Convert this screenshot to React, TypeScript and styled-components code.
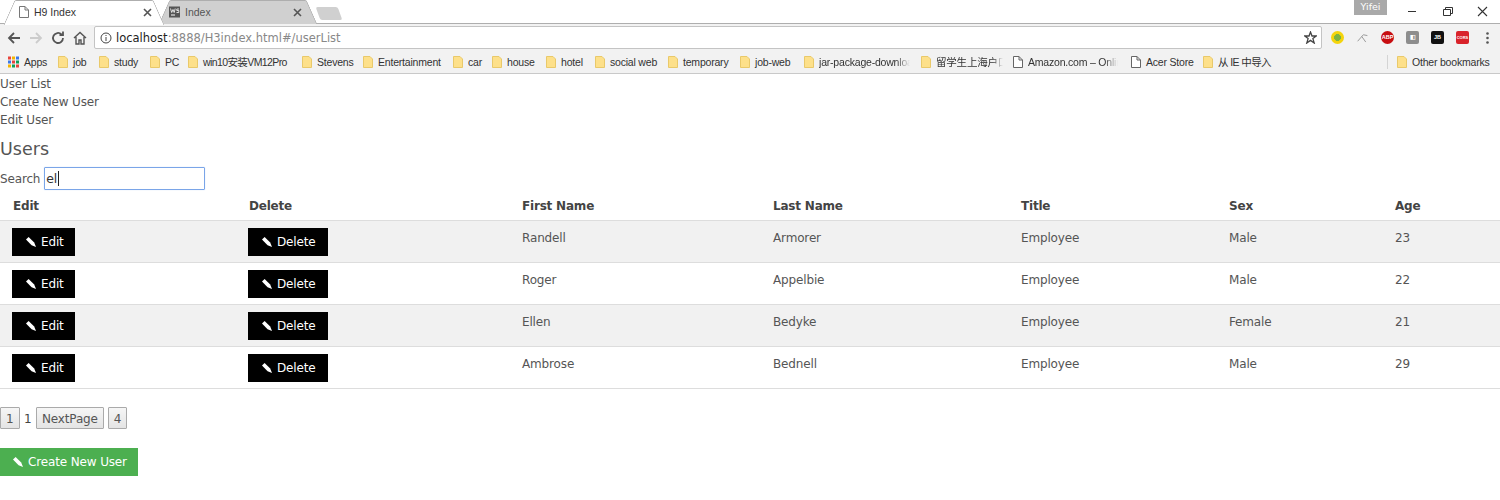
import React from 'react'
import styled, { createGlobalStyle } from 'styled-components'

const GlobalStyle = createGlobalStyle`
  html, body {
    margin: 0;
    padding: 0;
    background: #fff;
    overflow: hidden;
    font-family: "DejaVu Sans", Tahoma, sans-serif;
  }
  * { box-sizing: border-box; }
`

const Page = styled.div`
  width: 1500px;
  height: 500px;
  overflow: hidden;
`

/* browser chrome */

const TabStrip = styled.div`
  height: 24px;
  display: flex;
  align-items: flex-start;
  position: relative;
  padding-left: 5px;
  background: #fff;
  border-bottom: 1px solid #aeaeae;
`

const Tab = styled.div<{ $active?: boolean }>`
  position: relative;
  width: ${p => (p.$active ? 158 : 155)}px;
  height: 24px;
  margin-right: -3px;
  display: flex;
  align-items: center;
  padding: 0 ${p => (p.$active ? '11px 0 14px' : '13px 0 9px')};
  gap: 5px;
  font-family: "Liberation Sans", Arial, sans-serif;
  font-size: 10.5px;
  color: ${p => (p.$active ? '#333' : '#555')};
  z-index: ${p => (p.$active ? 2 : 1)};

  &::before {
    content: '';
    position: absolute;
    top: 0;
    bottom: ${p => (p.$active ? '-1px' : '0')};
    left: 4px;
    width: 70%;
    background: ${p => (p.$active ? '#fff' : '#d0d0d0')};
    border: 1px solid #aeaeae;
    border-right: 0;
    border-bottom: 0;
    border-radius: 2px 0 0 0;
    transform: skewX(-24deg);
    z-index: -1;
  }

  &::after {
    content: '';
    position: absolute;
    top: 0;
    bottom: ${p => (p.$active ? '-1px' : '0')};
    right: 4px;
    width: 70%;
    background: ${p => (p.$active ? '#fff' : '#d0d0d0')};
    border: 1px solid #aeaeae;
    border-left: 0;
    border-bottom: 0;
    border-radius: 0 2px 0 0;
    transform: skewX(24deg);
    z-index: -1;
  }
`

const TabTitle = styled.span`
  flex: 1;
`

const TabClose = styled.svg`
  width: 9px;
  height: 9px;
  stroke: #555;
  stroke-width: 1.6;
  fill: none;
`

const NewTab = styled.div`
  width: 22px;
  height: 13px;
  margin: 7px 0 0 6px;
  background: #d0d0d0;
  border-radius: 2px;
  transform: skewX(20deg);
`

const UserBadge = styled.div`
  position: absolute;
  left: 1354px;
  top: 0;
  width: 33px;
  height: 15px;
  background: #a9a9a9;
  color: #fff;
  font-size: 9.5px;
  line-height: 14px;
  text-align: center;
`

const WindowButtons = styled.div`
  position: absolute;
  right: 0;
  top: 0;
  display: flex;
`

const WindowButton = styled.svg`
  width: 35px;
  height: 22px;
  stroke: #333;
  fill: none;
`

const Toolbar = styled.div`
  height: 26px;
  display: flex;
  align-items: center;
  background: #f2f2f2;
  padding: 1px 0 0 6px;
`

const NavIcon = styled.svg<{ $ml?: number }>`
  width: 16px;
  height: 16px;
  margin-left: ${p => p.$ml ?? 0}px;
  flex: none;
  fill: none;
  stroke-width: 1.8;
`

const AddressBar = styled.div`
  width: 1228px;
  height: 23px;
  margin-left: 6px;
  display: flex;
  align-items: center;
  padding: 0 4px 0 5px;
  background: #fff;
  border: 1px solid #c4c4c4;
  border-radius: 2px;
  font-size: 11.5px;
  color: #888;
`

const InfoIcon = styled.svg`
  width: 12px;
  height: 12px;
  margin-right: 4px;
  stroke: #444;
  fill: none;
`

const Host = styled.span`
  color: #222;
`

const Url = styled.span`
  flex: 1;
`

const StarIcon = styled.svg`
  width: 13px;
  height: 13px;
  stroke: #444;
  fill: none;
  stroke-width: 1.3;
`

const Extensions = styled.div`
  flex: 1;
  display: flex;
  align-items: center;
  padding-left: 9px;
  gap: 12px;
`

const ExtBadge = styled.div<{ $bg: string; $round?: boolean; $small?: boolean }>`
  width: 13px;
  height: 13px;
  flex: none;
  background: ${p => p.$bg};
  border-radius: ${p => (p.$round ? '50%' : '2px')};
  color: #fff;
  font-family: "Liberation Sans", Arial, sans-serif;
  font-size: ${p => (p.$small ? 4 : 5.5)}px;
  font-weight: 700;
  line-height: 13px;
  text-align: center;
  overflow: hidden;
`

const Kebab = styled.svg`
  width: 3px;
  height: 12px;
  margin-left: 5px;
  fill: #555;
`

const BookmarkBar = styled.div`
  height: 24px;
  display: flex;
  align-items: center;
  padding-left: 8px;
  background: #f2f2f2;
  border-bottom: 1px solid #c9c9c9;
  font-family: "Liberation Sans", "Noto Sans CJK SC", sans-serif;
  font-size: 10.5px;
  letter-spacing: -0.2px;
  color: #333;
  white-space: nowrap;
`

const Bookmark = styled.div<{ $w: number }>`
  width: ${p => p.$w}px;
  flex: none;
  display: flex;
  align-items: center;
  gap: 5px;
`

const BookmarkIcon = styled.svg`
  width: 10px;
  height: 12px;
  flex: none;
`

const BookmarkLabel = styled.span<{ $fade?: number; $tight?: number }>`
  ${p => (p.$tight ? `letter-spacing: ${p.$tight}px;` : '')}
  ${p => (p.$fade ? `
    width: ${p.$fade}px;
    overflow: hidden;
    -webkit-mask-image: linear-gradient(to right, #000 85%, transparent);
    mask-image: linear-gradient(to right, #000 85%, transparent);
  ` : '')}
`

const Separator = styled.div`
  width: 1px;
  height: 14px;
  margin-right: 9px;
  background: #d4d4d4;
`

/* page content */

const Content = styled.main`
  font-size: 12px;
  letter-spacing: -0.15px;
  color: #555;
  padding-top: 1px;
`

const NavLink = styled.div`
  height: 18px;
  line-height: 18px;
`

const Heading = styled.h2`
  margin: 10px 0 0;
  height: 21px;
  font-size: 17.5px;
  font-weight: 400;
  letter-spacing: 0;
  line-height: 21px;
`

const SearchRow = styled.label`
  display: flex;
  align-items: center;
  gap: 4px;
  margin-top: 7px;
  height: 23px;
`

const SearchBox = styled.div`
  width: 161px;
  height: 23px;
  display: flex;
  align-items: center;
  padding-left: 1px;
  color: #333;
  font-size: 12.5px;
  border: 1px solid #7aa5e8;
  border-radius: 1px;
  box-shadow: 0 0 1px #a9c6f5;
`

const Caret = styled.span`
  width: 1px;
  height: 15px;
  margin-left: 1px;
  background: #222;
`

const Table = styled.table`
  width: 1500px;
  table-layout: fixed;
  border-collapse: collapse;
  margin-top: 2px;
`

const HeadCell = styled.th`
  height: 28px;
  padding: 0 0 0 13px;
  text-align: left;
  font-size: 12px;
  font-weight: 700;
  letter-spacing: -0.2px;
  color: #444;
  border-bottom: 1px solid #ddd;
`

const Row = styled.tr<{ $odd: boolean }>`
  background: ${p => (p.$odd ? '#f1f1f1' : '#fff')};
  border-bottom: 1px solid #ddd;
`

const Cell = styled.td`
  height: 42px;
  padding: 8px 0 0 13px;
  vertical-align: top;
  line-height: 18px;
`

const ActionCell = styled(Cell)`
  padding: 7px 0 0 12px;
`

const ActionButton = styled.button<{ $w: number }>`
  width: ${p => p.$w}px;
  height: 28px;
  display: inline-flex;
  align-items: center;
  gap: 5px;
  padding: 1px 0 0 14px;
  border: 0;
  background: #000;
  color: #fff;
  font: inherit;
  letter-spacing: inherit;
`

const PencilIcon = styled.svg`
  width: 10px;
  height: 10px;
  flex: none;
  fill: #fff;
`

const Pager = styled.div`
  display: flex;
  align-items: center;
  gap: 4px;
  margin-top: 18px;
  height: 22px;
`

const PageButton = styled.button`
  height: 22px;
  padding: 2px 5px 0;
  border: 1px solid #aaa;
  border-radius: 1px;
  background: linear-gradient(#f6f6f6, #e4e4e4);
  color: #555;
  font: inherit;
  letter-spacing: inherit;
`

const PageCurrent = styled.span`
  padding: 2px 0.5px 0;
  color: #444;
`

const CreateButton = styled.button`
  display: flex;
  align-items: center;
  justify-content: center;
  gap: 5px;
  width: 138px;
  height: 28px;
  margin-top: 19px;
  padding: 1px 0 0 2px;
  border: 0;
  background: #4caf50;
  color: #fff;
  font: inherit;
  letter-spacing: inherit;
`

const Pencil = () => (
  <PencilIcon viewBox="0 0 10 10">
    <path d="M0 2.6 L2.6 0 L8.2 5.6 L10 10 L5.6 8.2 Z" />
  </PencilIcon>
)

const Folder = () => (
  <BookmarkIcon viewBox="0 0 10 12">
    <path d="M0.5 0.5 H7 L9.5 3 V11.5 H0.5 Z" fill="#fde08a" stroke="#e9c96a" />
  </BookmarkIcon>
)

const PageGlyph = () => (
  <BookmarkIcon viewBox="0 0 10 12">
    <path d="M0.5 0.5 H6 L9.5 4 V11.5 H0.5 Z M6 0.5 V4 H9.5" fill="#fff" stroke="#666" />
  </BookmarkIcon>
)

const AppsGrid = () => (
  <BookmarkIcon viewBox="0 0 11 11" style={{ width: 11 }}>
    {['#e8453c', '#f4b400', '#3b78e7', '#3b78e7', '#e8453c', '#0f9d58', '#f4b400', '#0f9d58', '#e8453c'].map((c, i) => (
      <rect key={i} x={(i % 3) * 4} y={Math.floor(i / 3) * 4} width="3" height="3" fill={c} />
    ))}
  </BookmarkIcon>
)

const bookmarks: { label: string; w: number; fade?: number; tight?: number }[] = [
  { label: 'job', w: 41 },
  { label: 'study', w: 51 },
  { label: 'PC', w: 38 },
  { label: 'win10安装VM12Pro', w: 114, tight: -0.6 },
  { label: 'Stevens', w: 61 },
  { label: 'Entertainment', w: 90 },
  { label: 'car', w: 39 },
  { label: 'house', w: 54 },
  { label: 'hotel', w: 49 },
  { label: 'social web', w: 73 },
  { label: 'temporary', w: 72 },
  { label: 'job-web', w: 64 },
  { label: 'jar-package-download', w: 117, fade: 91 },
  { label: '留学生上海户口', w: 92, fade: 67 },
]

const users = [
  { first: 'Randell', last: 'Armorer', title: 'Employee', sex: 'Male', age: 23 },
  { first: 'Roger', last: 'Appelbie', title: 'Employee', sex: 'Male', age: 22 },
  { first: 'Ellen', last: 'Bedyke', title: 'Employee', sex: 'Female', age: 21 },
  { first: 'Ambrose', last: 'Bednell', title: 'Employee', sex: 'Male', age: 29 },
]

const columns = [
  { label: 'Edit', w: 236 },
  { label: 'Delete', w: 273 },
  { label: 'First Name', w: 251 },
  { label: 'Last Name', w: 248 },
  { label: 'Title', w: 208 },
  { label: 'Sex', w: 166 },
  { label: 'Age', w: 118 },
]

export default function App() {
  return (
    <Page>
      <GlobalStyle />
      <TabStrip>
        <Tab $active>
          <BookmarkIcon viewBox="0 0 10 12">
            <path d="M0.5 0.5 H6 L9.5 4 V11.5 H0.5 Z M6 0.5 V4 H9.5" fill="#fff" stroke="#777" />
          </BookmarkIcon>
          <TabTitle>H9 Index</TabTitle>
          <TabClose viewBox="0 0 9 9"><path d="M1 1 L8 8 M8 1 L1 8" /></TabClose>
        </Tab>
        <Tab>
          <BookmarkIcon viewBox="0 0 11 11" style={{ width: 11 }}>
            <rect width="11" height="11" fill="#555" />
            <rect x="2" y="8" width="4" height="1" fill="#fff" />
            <path d="M1.5 2 L2.7 6 L4 3 L5.2 6 L6.2 2 M10 2.5 H7.8 V4 H9.8 V6 H7.5" stroke="#fff" strokeWidth="0.8" fill="none" />
          </BookmarkIcon>
          <TabTitle>Index</TabTitle>
          <TabClose viewBox="0 0 9 9"><path d="M1 1 L8 8 M8 1 L1 8" /></TabClose>
        </Tab>
        <NewTab />
        <UserBadge>Yifei</UserBadge>
        <WindowButtons>
          <WindowButton viewBox="0 0 35 22"><path d="M13 11.5 H21" /></WindowButton>
          <WindowButton viewBox="0 0 35 22"><path d="M13.5 9.5 H20.5 V15.5 H13.5 Z M15.5 9 V7.5 H22.5 V13.5 H20.5" /></WindowButton>
          <WindowButton viewBox="0 0 35 22"><path d="M13 7 L22 16 M22 7 L13 16" strokeWidth="1.1" /></WindowButton>
        </WindowButtons>
      </TabStrip>

      <Toolbar>
        <NavIcon viewBox="0 0 16 16" stroke="#555"><path d="M14 8 H3 M8 3 L3 8 L8 13" /></NavIcon>
        <NavIcon viewBox="0 0 16 16" $ml={6} stroke="#ccc"><path d="M2 8 H13 M8 3 L13 8 L8 13" /></NavIcon>
        <NavIcon viewBox="0 0 16 16" $ml={6} stroke="#555"><path d="M13 8 A5 5 0 1 1 11.5 4.4 M13 1.5 V5 H9.5" /></NavIcon>
        <NavIcon viewBox="0 0 16 16" $ml={6} stroke="#555"><path d="M2 8 L8 2.5 L14 8 M4 7 V14 H7 V10 H9 V14 H12 V7" strokeWidth="1.4" /></NavIcon>
        <AddressBar>
          <InfoIcon viewBox="0 0 12 12">
            <circle cx="6" cy="6" r="5" />
            <path d="M6 5 V9 M6 3 V4" />
          </InfoIcon>
          <Url><Host>localhost</Host>:8888/H3index.html#/userList</Url>
          <StarIcon viewBox="0 0 13 13"><path d="M6.5 1 L8 5 L12.3 5 L8.9 7.6 L10.2 12 L6.5 9.4 L2.8 12 L4.1 7.6 L0.7 5 L5 5 Z" /></StarIcon>
        </AddressBar>
        <Extensions>
          <ExtBadge $bg="radial-gradient(circle, #7cb342 35%, #f4d40c 40%)" $round />
          <NavIcon viewBox="0 0 16 16" stroke="#999" style={{ width: 13 }}><path d="M2 12 L9 4 L14 5 M7 6 L12 13" strokeWidth="1.2" /></NavIcon>
          <ExtBadge $bg="#c70d11" $round>ABP</ExtBadge>
          <ExtBadge $bg="#8d8d8d">◧</ExtBadge>
          <ExtBadge $bg="#111">JB</ExtBadge>
          <ExtBadge $bg="#d9232a" $small>CORS</ExtBadge>
          <Kebab viewBox="0 0 3 12">
            <circle cx="1.5" cy="1.5" r="1.3" />
            <circle cx="1.5" cy="6" r="1.3" />
            <circle cx="1.5" cy="10.5" r="1.3" />
          </Kebab>
        </Extensions>
      </Toolbar>

      <BookmarkBar>
        <Bookmark $w={50}><AppsGrid /><BookmarkLabel>Apps</BookmarkLabel></Bookmark>
        {bookmarks.map(b => (
          <Bookmark key={b.label} $w={b.w}>
            <Folder />
            <BookmarkLabel $fade={b.fade} $tight={b.tight}>{b.label}</BookmarkLabel>
          </Bookmark>
        ))}
        <Bookmark $w={118}><PageGlyph /><BookmarkLabel $fade={90}>Amazon.com – Online</BookmarkLabel></Bookmark>
        <Bookmark $w={72}><PageGlyph /><BookmarkLabel>Acer Store</BookmarkLabel></Bookmark>
        <Bookmark $w={184}><Folder /><BookmarkLabel $tight={-0.6}>从 IE 中导入</BookmarkLabel></Bookmark>
        <Separator />
        <Bookmark $w={100}><Folder /><BookmarkLabel>Other bookmarks</BookmarkLabel></Bookmark>
      </BookmarkBar>

      <Content>
        <NavLink>User List</NavLink>
        <NavLink>Create New User</NavLink>
        <NavLink>Edit User</NavLink>
        <Heading>Users</Heading>
        <SearchRow>
          Search
          <SearchBox>el<Caret /></SearchBox>
        </SearchRow>
        <Table>
          <colgroup>
            {columns.map(c => <col key={c.label} width={c.w} />)}
          </colgroup>
          <thead>
            <tr>
              {columns.map(c => <HeadCell key={c.label}>{c.label}</HeadCell>)}
            </tr>
          </thead>
          <tbody>
            {users.map((u, i) => (
              <Row key={u.first} $odd={i % 2 === 0}>
                <ActionCell><ActionButton $w={63}><Pencil />Edit</ActionButton></ActionCell>
                <ActionCell><ActionButton $w={80}><Pencil />Delete</ActionButton></ActionCell>
                <Cell>{u.first}</Cell>
                <Cell>{u.last}</Cell>
                <Cell>{u.title}</Cell>
                <Cell>{u.sex}</Cell>
                <Cell>{u.age}</Cell>
              </Row>
            ))}
          </tbody>
        </Table>
        <Pager>
          <PageButton>1</PageButton>
          <PageCurrent>1</PageCurrent>
          <PageButton>NextPage</PageButton>
          <PageButton>4</PageButton>
        </Pager>
        <CreateButton><Pencil />Create New User</CreateButton>
      </Content>
    </Page>
  )
}
